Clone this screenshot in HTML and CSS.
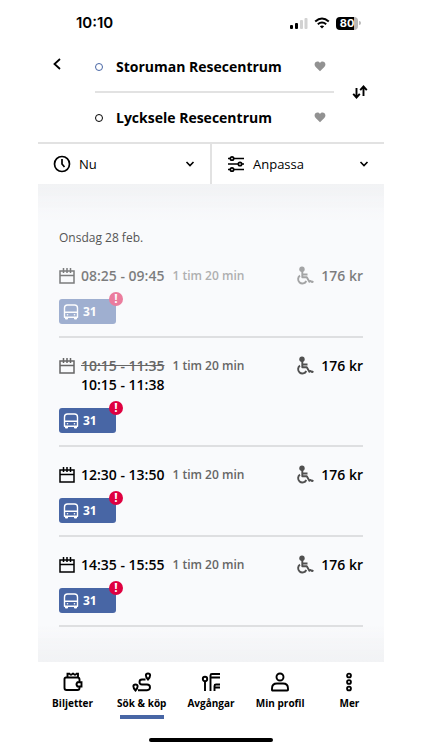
FILE: index.html
```html
<!DOCTYPE html>
<html lang="sv">
<head>
<meta charset="utf-8">
<meta name="viewport" content="width=device-width, initial-scale=1">
<title>Storuman – Lycksele</title>
<link rel="stylesheet" href="styles.css">
</head>
<body>
<svg class="sprite" aria-hidden="true">
  <symbol id="calendar" viewBox="0 0 16 16"><path d="M1 3h14v12H1zM1 7.500h14M4.500 0v5M8 0v5M11.500 0v5" fill="none" stroke="currentColor" stroke-width="1.500"/></symbol>
  <symbol id="bus" viewBox="0 0 16 16"><path d="M1.500 13.200V4q0-3 3-3h7q3 0 3 3v9.200zM1.500 8.300h13" fill="none" stroke="currentColor" stroke-width="1.400" stroke-linejoin="round"/><path d="M2 13h3v2q-1.500 1-3 0zM11 13h3v2q-1.500 1-3 0z" fill="currentColor"/><circle cx="4.500" cy="10.800" r=".8" fill="currentColor"/><circle cx="11.500" cy="10.800" r=".8" fill="currentColor"/></symbol>
  <symbol id="wheelchair" viewBox="0 0 18 19"><circle cx="6" cy="3.200" r="2.700" fill="currentColor"/><path d="M6.300 5v6.300h4.500l2.600 4.400q1-1.600 2 0 .8.900 1.800-.6M7 8.500h4.500M4 9.600a4.300 4.300 0 1 0 6.300 5.400" fill="none" stroke="currentColor" stroke-width="1.900" stroke-linejoin="round"/></symbol>
  <symbol id="heart" viewBox="0 0 12 11"><path d="M6 10.300L1.700 6C-1.600 2.500 3.200-1.700 6 1.900 8.800-1.700 13.600 2.500 10.300 6z" fill="currentColor"/></symbol>
  <symbol id="chevron" viewBox="0 0 10 10"><path d="M1.500 3L5 6.500 8.500 3" fill="none" stroke="currentColor" stroke-width="1.600"/></symbol>
</svg>
<div class="app">
  <div class="status">
    <span class="clock">10:10</span>
    <div class="signals">
      <svg width="18" height="12" viewBox="0 0 18 12"><rect y="8" width="3" height="4" rx="1"/><rect x="5" y="6" width="3" height="6" rx="1"/><g fill="#d2d2d2"><rect x="10" y="3" width="3" height="9" rx="1"/><rect x="14.500" y="1" width="3" height="11" rx="1"/></g></svg>
      <svg width="16" height="12" viewBox="0 0 16 12" fill="none" stroke="#000" stroke-width="2"><path d="M1.200 4.500q6.800-6 13.600 0M3.800 7.200q4.200-3.500 8.400 0"/><path d="M5.800 9.200q2.200-1.500 4.400 0L8 11.500z" fill="#000" stroke="none"/></svg>
      <div class="battery"><span class="level">80</span></div>
    </div>
  </div>

  <header class="route">
    <button class="icon-button" aria-label="Tillbaka"><svg width="10" height="12" viewBox="0 0 10 12"><path d="M8 1L2.500 6 8 11" fill="none" stroke="#000" stroke-width="1.800"/></svg></button>
    <div class="stops">
      <div class="stop"><span class="dot from"></span><span class="place">Storuman Resecentrum</span><button class="heart" aria-label="Spara Storuman"><svg width="12" height="11"><use href="#heart"/></svg></button></div>
      <div class="stop"><span class="dot"></span><span class="place">Lycksele Resecentrum</span><button class="heart" aria-label="Spara Lycksele"><svg width="12" height="11"><use href="#heart"/></svg></button></div>
    </div>
    <button class="icon-button swap" aria-label="Byt riktning"><svg width="16" height="14" viewBox="0 0 16 14" fill="none" stroke="#000" stroke-width="1.900"><path d="M4.500 3v9M1.200 8.800l3.300 3.700 3.300-3.700M11.500 11V2M8.200 5.200l3.300-3.700 3.300 3.700"/></svg></button>
  </header>

  <div class="filters">
    <button class="filter"><svg width="18" height="18" viewBox="0 0 18 18" fill="none" stroke="#000" stroke-width="1.700"><circle cx="9" cy="9" r="7.500"/><path d="M9 4v5l2.500 3"/></svg><span class="filter-name">Nu</span><svg width="10" height="10"><use href="#chevron"/></svg></button>
    <button class="filter"><svg width="18" height="18" viewBox="0 0 18 18" fill="none" stroke="#000" stroke-width="1.700"><path d="M1 3.500h2.500M6.500 3.500H17M1 9h10.500M14.500 9H17M1 14.500h2.500M6.500 14.500H17"/><circle cx="5" cy="3.500" r="1.700"/><circle cx="13" cy="9" r="1.700"/><circle cx="5" cy="14.500" r="1.700"/></svg><span class="filter-name">Anpassa</span><svg width="10" height="10"><use href="#chevron"/></svg></button>
  </div>

  <main class="trips">
    <h1 class="date">Onsdag 28 feb.</h1>
    <article class="trip past">
      <div class="summary"><svg class="calendar" width="16" height="16"><use href="#calendar"/></svg><div class="times">08:25 - 09:45</div><span class="duration">1 tim 20 min</span><svg class="wheelchair" width="18" height="19"><use href="#wheelchair"/></svg><span class="price">176 kr</span></div>
      <div class="line"><svg width="16" height="16"><use href="#bus"/></svg>31<span class="alert">!</span></div>
    </article>
    <article class="trip changed">
      <div class="summary"><svg class="calendar" width="16" height="16"><use href="#calendar"/></svg><div class="times"><s>10:15 - 11:35</s><br>10:15 - 11:38</div><span class="duration">1 tim 20 min</span><svg class="wheelchair" width="18" height="19"><use href="#wheelchair"/></svg><span class="price">176 kr</span></div>
      <div class="line"><svg width="16" height="16"><use href="#bus"/></svg>31<span class="alert">!</span></div>
    </article>
    <article class="trip">
      <div class="summary"><svg class="calendar" width="16" height="16"><use href="#calendar"/></svg><div class="times">12:30 - 13:50</div><span class="duration">1 tim 20 min</span><svg class="wheelchair" width="18" height="19"><use href="#wheelchair"/></svg><span class="price">176 kr</span></div>
      <div class="line"><svg width="16" height="16"><use href="#bus"/></svg>31<span class="alert">!</span></div>
    </article>
    <article class="trip">
      <div class="summary"><svg class="calendar" width="16" height="16"><use href="#calendar"/></svg><div class="times">14:35 - 15:55</div><span class="duration">1 tim 20 min</span><svg class="wheelchair" width="18" height="19"><use href="#wheelchair"/></svg><span class="price">176 kr</span></div>
      <div class="line"><svg width="16" height="16"><use href="#bus"/></svg>31<span class="alert">!</span></div>
    </article>
  </main>

  <nav class="tabs">
    <a class="tab" href="#biljetter"><svg width="20" height="20" viewBox="0 0 20 20"><path d="M4.500 5.500V1.800h2q1.500 2 3 0h1q1.500 2 3 0h1.500v4M4 5.500H3Q1.500 5.500 1.500 7v9q0 2 2 2h11q2 0 2-2v-1.500M4 5.500h10.500q2 0 2 2v2.500M14.500 10.200h4v4.300h-4q-2-2.100 0-4.300z"/></svg>Biljetter</a>
    <a class="tab current" href="#sok" aria-current="page"><svg width="20" height="20" viewBox="0 0 20 20"><path d="M16 7.500c-3-3.200-2.700-6 0-6s3 2.800 0 6zM3.500 18.500c-3-3.200-2.700-6 0-6s3 2.800 0 6zM13.500 7.500H10q-2.500 0-2.500 2.500t2.500 2.500h5q3 0 3 2.800T15 18.200H6"/></svg>Sök &amp; köp</a>
    <a class="tab" href="#avgangar"><svg width="20" height="20" viewBox="0 0 20 20"><circle cx="4" cy="7" r="2.200"/><path d="M4 9.500V19M9.500 19V3.500q0-1.500 1.500-1.500h8M10 5.500h9M13.500 19v-5q0-1.500 1.500-1.500h4M14 15.500h5"/></svg>Avgångar</a>
    <a class="tab" href="#profil"><svg width="20" height="20" viewBox="0 0 20 20"><circle cx="10" cy="5" r="3.500"/><path d="M2 18v-1.500q0-5 5-5h6q5 0 5 5V18q0 .5-.8.500H2.800Q2 18.500 2 18z"/></svg>Min profil</a>
    <a class="tab" href="#mer"><svg width="20" height="20" viewBox="0 0 20 20"><circle cx="10" cy="3.500" r="1.900"/><circle cx="10" cy="10" r="1.900"/><circle cx="10" cy="16.500" r="1.900"/></svg>Mer</a>
  </nav>
  <div class="home-bar"></div>
</div>
</body>
</html>
```
FILE: styles.css
```css
* { box-sizing: border-box; }
body {
  margin: 0;
  background: #fff;
  color: #000;
  font: 12px/20px "Open Sans", "Noto Sans", sans-serif;
}
svg { display: block; flex: none; }
button {
  margin: 0;
  padding: 0;
  border: 0;
  background: none;
  color: inherit;
  font: inherit;
}
.sprite { position: absolute; width: 0; height: 0; }
.app {
  display: flex;
  flex-direction: column;
  min-height: 100vh;
  padding: 0 9%;
}

.status {
  display: flex;
  align-items: center;
  justify-content: space-between;
  height: 42px;
  padding: 4px 23px 0 38px;
  font-family: Inter, sans-serif;
}
.clock { font-size: 15px; font-weight: 600; }
.signals { display: flex; align-items: center; gap: 6px; }
.battery { display: flex; align-items: center; gap: 1px; }
.battery::after {
  content: "";
  width: 2px;
  height: 4px;
  border-radius: 0 2px 2px 0;
  background: #b8b8b8;
}
.level {
  width: 22px;
  border-radius: 4px;
  background: linear-gradient(90deg, #000 80%, #b8b8b8 80%);
  color: #fff;
  font-size: 11px;
  font-weight: 700;
  line-height: 13px;
  text-align: center;
}

.route {
  display: flex;
  align-items: center;
  padding: 0 16px 0 14px;
  border-bottom: 2px solid #e2e2e2;
}
.icon-button { display: grid; place-items: center; width: 16px; height: 24px; }
.icon-button:first-child { align-self: flex-start; margin-top: 10px; width: 10px; }
.stops { flex: 1; margin: 0 18px 0 33px; }
.stop { display: flex; align-items: center; height: 49px; padding-right: 8px; }
.stop:last-child { height: 51px; border-top: 2px solid #e2e2e2; }
.dot { width: 8px; height: 8px; border: 1px solid #000; border-radius: 50%; }
.from { border-color: #4866a5; }
.place { flex: 1; margin-left: 13px; font-size: 14px; font-weight: 700; }
.heart { color: #929292; }

.filters { display: flex; background: #fff; }
.filter {
  display: flex;
  flex: 1;
  align-items: center;
  gap: 8px;
  height: 40px;
  padding: 0 15px;
}
.filter + .filter { border-left: 2px solid #e2e2e2; }
.filter-name { flex: 1; font-size: 13px; text-align: left; }

.trips {
  flex: 1;
  padding: 44px 21px 0;
  background:
    linear-gradient(#f1f2f4, #f9fafc00 36px),
    linear-gradient(0deg, #f1f2f4, #f9fafc00 36px),
    #f9fafc;
}
.date { margin: 0 0 18px; color: #555; font-size: 12px; font-weight: 400; line-height: 20px; }
.trip { padding-bottom: 12px; border-bottom: 2px solid #dedfe1; }
.trip + .trip { padding-top: 18px; }
.summary { display: flex; align-items: flex-start; font-size: 14px; font-weight: 600; line-height: 20px; }
.calendar { margin: 2px 6px 0 0; }
.times { padding-bottom: 1px; line-height: 19px; }
.duration { flex: 1; margin-left: 8px; color: #666; font-size: 12px; font-weight: 600; }
.wheelchair { margin-right: 7px; color: #505050; }
.line {
  position: relative;
  display: flex;
  align-items: center;
  gap: 4px;
  width: 57px;
  height: 25px;
  margin-top: 13px;
  padding-left: 4px;
  border-radius: 3px;
  background: #4866a5;
  color: #fff;
  font-size: 12px;
  font-weight: 700;
}
.alert {
  position: absolute;
  top: -7px;
  right: -7px;
  width: 14px;
  height: 14px;
  border-radius: 50%;
  background: #df0040;
  line-height: 14px;
  text-align: center;
}
.past > * { opacity: .5; }
.changed s, .changed .calendar { color: #666; }

.tabs { display: grid; grid-template-columns: repeat(5, 1fr); height: 58px; }
.tab {
  display: flex;
  flex-direction: column;
  align-items: center;
  gap: 3px;
  padding-top: 10px;
  color: #000;
  font-size: 10px;
  font-weight: 700;
  line-height: 17px;
  text-decoration: none;
  white-space: nowrap;
}
.tab svg { fill: none; stroke: currentColor; stroke-width: 1.900; }
.current::after { content: ""; width: 44px; height: 4px; background: #4866a5; }
.home-bar {
  width: 36%;
  height: 4px;
  margin: 18px auto 8px;
  border-radius: 2px;
  background: #000;
}
```
